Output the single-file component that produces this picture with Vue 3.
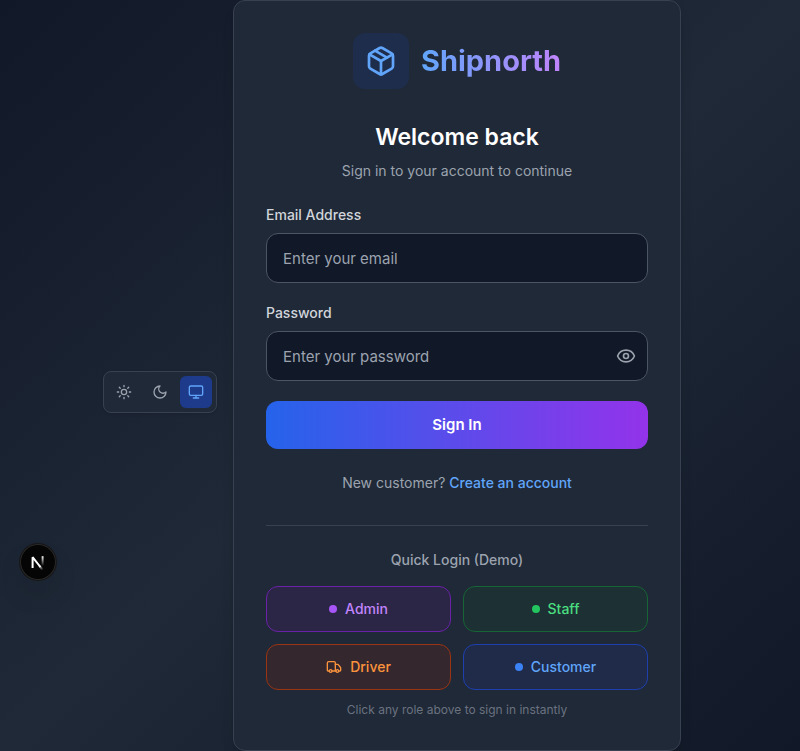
<script setup>
import { ref } from 'vue'

const email = ref('')
const password = ref('')
const showPassword = ref(false)
const theme = ref('system')

const themes = [
  { id: 'light', label: 'Light theme' },
  { id: 'dark', label: 'Dark theme' },
  { id: 'system', label: 'System theme' },
]

const roles = [
  { id: 'admin', label: 'Admin' },
  { id: 'staff', label: 'Staff' },
  { id: 'driver', label: 'Driver' },
  { id: 'customer', label: 'Customer' },
]
</script>

<template>
  <main class="page">
    <div class="theme-toggle" role="group" aria-label="Theme">
      <button
        v-for="t in themes"
        :key="t.id"
        type="button"
        class="theme-button"
        :class="{ active: theme === t.id }"
        :aria-label="t.label"
        :aria-pressed="theme === t.id"
        @click="theme = t.id"
      >
        <svg class="icon icon-small" viewBox="0 0 24 24" aria-hidden="true">
          <template v-if="t.id === 'light'">
            <circle cx="12" cy="12" r="4" />
            <path d="M12 2v2M12 20v2M4.93 4.93l1.41 1.41M17.66 17.66l1.41 1.41M2 12h2M20 12h2M6.34 17.66l-1.41 1.41M19.07 4.93l-1.41 1.41" />
          </template>
          <path v-else-if="t.id === 'dark'" d="M12 3a6 6 0 0 0 9 9 9 9 0 1 1-9-9Z" />
          <template v-else>
            <rect x="2" y="3" width="20" height="14" rx="2" />
            <path d="M8 21h8M12 17v4" />
          </template>
        </svg>
      </button>
    </div>

    <section class="card">
      <div class="brand">
        <span class="brand-mark">
          <svg class="icon icon-large" viewBox="0 0 24 24" aria-hidden="true">
            <path d="M11 21.73a2 2 0 0 0 2 0l7-4A2 2 0 0 0 21 16V8a2 2 0 0 0-1-1.73l-7-4a2 2 0 0 0-2 0l-7 4A2 2 0 0 0 3 8v8a2 2 0 0 0 1 1.73z" />
            <path d="M12 22V12" />
            <path d="M3.3 7 12 12l8.7-5" />
            <path d="m7.5 4.27 9 5.15" />
          </svg>
        </span>
        <span class="brand-name">Shipnorth</span>
      </div>

      <h1 class="title">Welcome back</h1>
      <p class="subtitle">Sign in to your account to continue</p>

      <form class="form" @submit.prevent>
        <div class="field">
          <label for="email">Email Address</label>
          <input id="email" v-model="email" type="email" placeholder="Enter your email" />
        </div>
        <div class="field">
          <label for="password">Password</label>
          <div class="password-box">
            <input
              id="password"
              v-model="password"
              class="with-action"
              :type="showPassword ? 'text' : 'password'"
              placeholder="Enter your password"
            />
            <button type="button" class="reveal" aria-label="Show password" @click="showPassword = !showPassword">
              <svg class="icon icon-medium" viewBox="0 0 24 24" aria-hidden="true">
                <path d="M2.06 12.35a1 1 0 0 1 0-.7 10.75 10.75 0 0 1 19.88 0 1 1 0 0 1 0 .7 10.75 10.75 0 0 1-19.88 0" />
                <circle cx="12" cy="12" r="3" />
              </svg>
            </button>
          </div>
        </div>
        <button type="submit" class="submit">Sign In</button>
      </form>

      <p class="signup">New customer? <a href="#register">Create an account</a></p>

      <div class="quick">
        <p class="quick-title">Quick Login (Demo)</p>
        <div class="roles">
          <button v-for="role in roles" :key="role.id" type="button" class="role" :class="role.id">
            <svg v-if="role.id === 'driver'" class="icon icon-small" viewBox="0 0 24 24" aria-hidden="true">
              <path d="M14 18V6a2 2 0 0 0-2-2H4a2 2 0 0 0-2 2v11a1 1 0 0 0 1 1h2M15 18H9" />
              <path d="M19 18h2a1 1 0 0 0 1-1v-3.65a1 1 0 0 0-.22-.62l-3.48-4.35A1 1 0 0 0 17.52 8H14" />
              <circle cx="17" cy="18" r="2" />
              <circle cx="7" cy="18" r="2" />
            </svg>
            <span v-else class="dot"></span>
            {{ role.label }}
          </button>
        </div>
        <p class="hint">Click any role above to sign in instantly</p>
      </div>
    </section>

    <button type="button" class="dev-badge" aria-label="Open developer tools">
      <svg viewBox="0 0 36 36" aria-hidden="true">
        <defs>
          <linearGradient id="diagonal" x1="20" y1="20" x2="24" y2="25" gradientUnits="userSpaceOnUse">
            <stop stop-color="#fff" />
            <stop offset="1" stop-color="#fff" stop-opacity="0" />
          </linearGradient>
          <linearGradient id="stem" x1="22" y1="12" x2="22" y2="22" gradientUnits="userSpaceOnUse">
            <stop stop-color="#fff" />
            <stop offset="1" stop-color="#fff" stop-opacity="0" />
          </linearGradient>
        </defs>
        <path d="M12.6 24V13.2L20.4 23" fill="none" stroke="#fff" stroke-width="2" stroke-linejoin="bevel" />
        <path d="M19.4 21.8 22.8 26" fill="none" stroke="url(#diagonal)" stroke-width="2" />
        <path d="M22.6 12.2V22" fill="none" stroke="url(#stem)" stroke-width="1.9" />
      </svg>
    </button>
  </main>
</template>

<style>
body {
  margin: 0;
  background: #111827;
}
</style>

<style scoped>
.page,
.page * {
  box-sizing: border-box;
}

.page {
  display: flex;
  align-items: center;
  justify-content: center;
  min-height: 100vh;
  background: linear-gradient(to bottom right, #111827, #1f2937, #111827);
  color: #fff;
  font-family: Inter, 'Liberation Sans', sans-serif;
  font-size: 14px;
  line-height: 20px;
}

h1,
p {
  margin: 0;
}

button,
input {
  font: inherit;
}

button {
  padding: 0;
  border: 0;
  background: none;
  cursor: pointer;
}

.icon {
  display: block;
  flex: none;
  fill: none;
  stroke: currentColor;
  stroke-width: 2;
  stroke-linecap: round;
  stroke-linejoin: round;
}

.icon-small {
  width: 16px;
  height: 16px;
}

.icon-medium {
  width: 20px;
  height: 20px;
}

.icon-large {
  width: 32px;
  height: 32px;
}

.theme-toggle {
  display: flex;
  flex: none;
  gap: 4px;
  margin-top: 32px;
  padding: 4px;
  border: 1px solid #374151;
  border-radius: 8px;
  background: #1f2937;
  box-shadow: 0 1px 3px rgba(0, 0, 0, 0.1);
}

.theme-button {
  padding: 8px;
  border-radius: 6px;
  color: #9ca3af;
}

.theme-button.active {
  background: #1e3a8a;
  color: #60a5fa;
}

.card {
  flex: 0 1 448px;
  min-width: 0;
  margin: 0 16px;
  padding: 32px;
  border: 1px solid #374151;
  border-radius: 12px;
  background: #1f2937;
  box-shadow: 0 10px 15px -3px rgba(0, 0, 0, 0.1), 0 4px 6px -4px rgba(0, 0, 0, 0.1);
  text-align: center;
}

.brand {
  display: flex;
  align-items: center;
  justify-content: center;
  gap: 12px;
  margin-bottom: 32px;
}

.brand-mark {
  padding: 12px;
  border-radius: 12px;
  background: #1f2d4d;
  color: #60a5fa;
}

.brand-name {
  background: linear-gradient(to right, #60a5fa, #c084fc);
  background-clip: text;
  color: transparent;
  font-size: 29px;
  font-weight: 700;
  line-height: 36px;
}

.title {
  margin-bottom: 8px;
  font-size: 23px;
  font-weight: 600;
  line-height: 32px;
}

.subtitle,
.signup,
.quick-title {
  color: #9ca3af;
}

.form {
  display: grid;
  gap: 20px;
  margin: 24px 0;
}

.field {
  display: grid;
  gap: 8px;
  text-align: left;
}

.field label {
  color: #d1d5db;
  font-weight: 500;
}

.field input {
  display: block;
  width: 100%;
  height: 50px;
  padding: 12px 16px;
  border: 1px solid #4b5563;
  border-radius: 12px;
  outline: none;
  background: #111827;
  color: #fff;
  font-size: 15px;
  line-height: 24px;
}

.field input::placeholder {
  color: #9ca3af;
  opacity: 1;
}

.field input:focus {
  border-color: #60a5fa;
}

.field .with-action {
  padding-right: 48px;
}

.password-box {
  position: relative;
}

.reveal {
  position: absolute;
  inset: 0 12px 0 auto;
  color: #9ca3af;
}

.submit {
  padding: 12px 16px;
  border-radius: 12px;
  background: linear-gradient(to right, #2563eb, #9333ea);
  color: #fff;
  font-size: 15px;
  font-weight: 600;
  line-height: 24px;
}

.signup a {
  color: #60a5fa;
  font-weight: 500;
  text-decoration: none;
}

.quick {
  margin-top: 32px;
  padding-top: 24px;
  border-top: 1px solid #374151;
}

.quick-title {
  margin-bottom: 16px;
  font-weight: 500;
}

.roles {
  display: grid;
  grid-template-columns: 1fr 1fr;
  gap: 12px;
}

.role {
  display: flex;
  align-items: center;
  justify-content: center;
  gap: 8px;
  padding: 12px 16px;
  border: 1px solid;
  border-radius: 12px;
  font-weight: 500;
}

.dot {
  width: 8px;
  height: 8px;
  border-radius: 50%;
}

.admin {
  border-color: #6b21a8;
  background: #2c2646;
  color: #c084fc;
}

.admin .dot {
  background: #a855f7;
}

.staff {
  border-color: #166534;
  background: #1d3033;
  color: #4ade80;
}

.staff .dot {
  background: #22c55e;
}

.driver {
  border-color: #9a3412;
  background: #34282e;
  color: #fb923c;
}

.customer {
  border-color: #1e40af;
  background: #1f2b48;
  color: #60a5fa;
}

.customer .dot {
  background: #3b82f6;
}

.hint {
  margin-top: 12px;
  color: #6b7280;
  font-size: 12px;
  line-height: 16px;
}

/* Floating badge, pinned over the page */
.dev-badge {
  position: fixed;
  bottom: 171px;
  left: 20px;
  width: 36px;
  height: 36px;
  border-radius: 50%;
  background: #050505;
  box-shadow: 0 0 0 1px #171717, inset 0 0 0 1px #2a2a2a, 0 16px 32px -8px rgba(0, 0, 0, 0.24);
}

.dev-badge svg {
  display: block;
  width: 36px;
  height: 36px;
}
</style>
